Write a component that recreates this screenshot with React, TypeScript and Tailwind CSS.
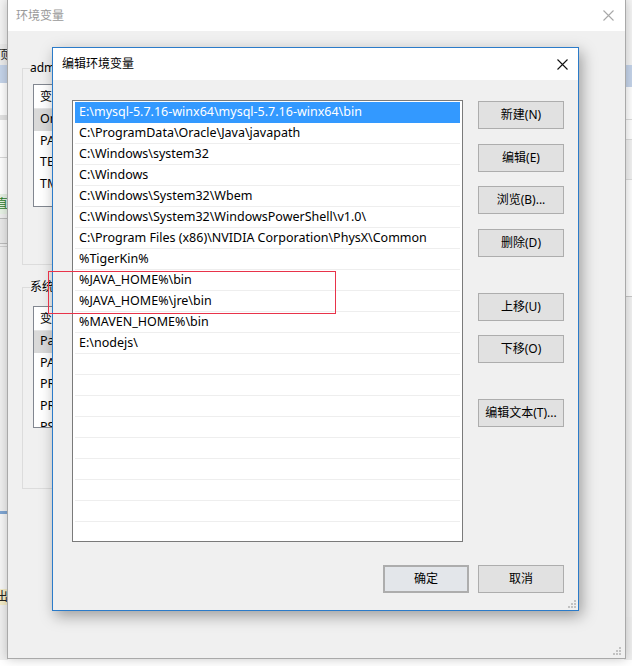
import React from "react";

const paths = [
  "E:\\mysql-5.7.16-winx64\\mysql-5.7.16-winx64\\bin",
  "C:\\ProgramData\\Oracle\\Java\\javapath",
  "C:\\Windows\\system32",
  "C:\\Windows",
  "C:\\Windows\\System32\\Wbem",
  "C:\\Windows\\System32\\WindowsPowerShell\\v1.0\\",
  "C:\\Program Files (x86)\\NVIDIA Corporation\\PhysX\\Common",
  "%TigerKin%",
  "%JAVA_HOME%\\bin",
  "%JAVA_HOME%\\jre\\bin",
  "%MAVEN_HOME%\\bin",
  "E:\\nodejs\\",
];

const userVars = ["OneDrive", "PATH", "TEMP", "TMP"];
const sysVars = ["Path", "PATHEXT", "PROCESSOR_ARCHITECTURE", "PROCESSOR_IDENTIFIER", "PSModulePath"];

function CloseX({ className = "" }: { className?: string }) {
  return (
    <svg width="11" height="11" viewBox="0 0 11 11" className={className}>
      <path d="M0.5 0.5L10.5 10.5M10.5 0.5L0.5 10.5" stroke="currentColor" strokeWidth="1.1" />
    </svg>
  );
}

function Grip() {
  return (
    <svg width="8" height="8" viewBox="0 0 8 8">
      <rect x="6" y="0" width="2" height="2" fill="#c2c2c2" />
      <rect x="3" y="3" width="2" height="2" fill="#c2c2c2" />
      <rect x="6" y="3" width="2" height="2" fill="#c2c2c2" />
      <rect x="0" y="6" width="2" height="2" fill="#c2c2c2" />
      <rect x="3" y="6" width="2" height="2" fill="#c2c2c2" />
      <rect x="6" y="6" width="2" height="2" fill="#c2c2c2" />
    </svg>
  );
}

function WinButton({ children, className = "" }: { children: React.ReactNode; className?: string }) {
  return (
    <div
      className={`h-[28px] w-[86px] shrink-0 flex items-center justify-center border border-[#adadad] bg-[#e1e1e1] text-black ${className}`}
    >
      {children}
    </div>
  );
}

function VarList({ items, height }: { items: string[]; height: string }) {
  return (
    <div className={`w-[400px] ${height} border border-[#828790] bg-white overflow-hidden text-[12.5px]`}>
      <div className="h-[24px] flex items-center pl-[6px] border-b border-[#e5e5e5] text-[12px]">变量</div>
      {items.map((v, i) => (
        <div key={v} className={`h-[21.5px] flex items-center pl-[6px] ${i === 0 ? "bg-[#d9d9d9]" : ""}`}>
          {v}
        </div>
      ))}
    </div>
  );
}

export default function App() {
  return (
    <div className="relative w-[632px] h-[666px] overflow-hidden bg-white text-[12px] font-['Noto_Sans','Noto_Sans_CJK_SC',sans-serif]">
      {/* window behind, left edge */}
      <div className="absolute left-0 top-0 w-[8px] h-[660px] flex flex-col bg-[#f0f0f0]">
        <div className="h-[44px] bg-[#f4f4f4]" />
        <div className="h-[21px] flex justify-end overflow-hidden bg-[#ececec] text-[#222]">
          <span className="shrink-0 leading-[21px]">顶</span>
        </div>
        <div className="h-[18px] bg-[#c5d4ea]" />
        <div className="h-[37px] bg-white border-b-[5px] border-[#e3e3e3]" />
        <div className="h-[38px] bg-white border-b border-[#d9d9d9]" />
        <div className="h-[36px] bg-white" />
        <div className="h-[20px] flex justify-end overflow-hidden bg-[#e8f3e6] text-[#2d7d2a]">
          <span className="shrink-0 leading-[20px]">直</span>
        </div>
        <div className="h-[26px] mt-[4px] border-y border-[#bdbdbd] bg-[#eaeaea]" />
        <div className="h-[265px] bg-[#f0f0f0] border-t border-[#d0d0d0] mt-[2px]" />
        <div className="h-[3px] bg-[#7fa6d3]" />
        <div className="h-[75px] bg-[#f7f7f7]" />
        <div className="h-[16px] flex justify-end overflow-hidden bg-[#f4ecc8] text-[#222]">
          <span className="shrink-0 leading-[16px]">出</span>
        </div>
      </div>

      {/* window behind, right edge */}
      <div className="absolute right-0 top-0 w-[8px] h-[660px] flex flex-col bg-[#f0f0f0]">
        <div className="h-[65px] bg-[#f4f4f4]" />
        <div className="h-[22px] bg-[#c5d4ea]" />
        <div className="h-[33px] bg-white border-b border-[#dcdcdc]" />
        <div className="h-[20px] bg-white border-b border-[#dcdcdc]" />
        <div className="h-[40px] bg-[#f2f2f2] border-b border-[#dcdcdc]" />
        <div className="h-[117px] bg-white border-b border-[#c8c8c8]" />
        <div className="h-[320px] bg-[#f2f2f2]" />
      </div>

      {/* outer window: 环境变量 */}
      <div className="absolute left-[7px] top-0 w-[619px] h-[659px] flex flex-col border border-t-0 border-[#a9a9a9] bg-[#f0f0f0] shadow-[0_0_10px_rgba(0,0,0,0.22)]">
        <div className="h-[31px] shrink-0 flex items-center justify-between pl-[8px] pr-[11px] bg-white text-[#999]">
          <span>环境变量</span>
          <CloseX className="text-[#a8a8a8]" />
        </div>
        <div className="flex-1 flex flex-col pl-[14px]">
          <fieldset className="mt-[29px] w-[540px] border border-[#dcdcdc] px-[10px]">
            <legend className="-ml-[3px] leading-[16px] text-black">admin 的用户变量(U)</legend>
            <div className="mt-[8px] mb-[57px]">
              <VarList items={userVars} height="h-[123px]" />
            </div>
          </fieldset>
          <fieldset className="mt-[14px] w-[540px] border border-[#dcdcdc] px-[10px]">
            <legend className="-ml-[3px] leading-[16px] text-black">系统变量(S)</legend>
            <div className="mt-[11px] mb-[60px]">
              <VarList items={sysVars} height="h-[122px]" />
            </div>
          </fieldset>
          <div className="flex-1" />
          <div className="flex justify-end pr-[4px] pb-[3px]">
            <Grip />
          </div>
        </div>
      </div>

      {/* modal dialog: 编辑环境变量 */}
      <div className="absolute left-[52px] top-[47px] w-[527px] h-[564px] flex flex-col border border-[#2b7bc9] bg-[#f0f0f0] shadow-[3px_5px_14px_rgba(0,0,0,0.35)]">
        <div className="h-[32px] shrink-0 flex items-center justify-between pl-[9px] pr-[10px] bg-white text-black">
          <span>编辑环境变量</span>
          <CloseX className="text-[#111]" />
        </div>
        <div className="relative flex-1 flex flex-col pt-[20px] pl-[19px] pr-[14px] pb-[17px]">
          <div className="flex gap-[15px]">
            <div className="w-[391px] h-[442px] shrink-0 border border-[#7a7a7a] bg-white pt-[1px] px-[2px] overflow-hidden text-[12.5px]">
              {Array.from({ length: 21 }).map((_, i) => (
                <div
                  key={i}
                  className={`h-[21px] flex items-center pl-[4px] border-b whitespace-nowrap ${
                    i === 0 ? "bg-[#3399ff] text-white border-[#3399ff]" : "text-black border-[#eeeeee]"
                  }`}
                >
                  {paths[i] ?? ""}
                </div>
              ))}
            </div>
            <div className="flex flex-col">
              <WinButton className="mt-[1px]">新建(N)</WinButton>
              <WinButton className="mt-[15px]">编辑(E)</WinButton>
              <WinButton className="mt-[14px]">浏览(B)...</WinButton>
              <WinButton className="mt-[15px]">删除(D)</WinButton>
              <WinButton className="mt-[36px]">上移(U)</WinButton>
              <WinButton className="mt-[14px]">下移(O)</WinButton>
              <WinButton className="mt-[36px]">编辑文本(T)...</WinButton>
            </div>
          </div>
          <div className="mt-[23px] flex justify-end gap-[9px]">
            <WinButton className="border-2 border-[#2a78cf] bg-[#e3e6ea]">确定</WinButton>
            <WinButton>取消</WinButton>
          </div>
          <div className="absolute right-[2px] bottom-[2px]">
            <Grip />
          </div>
        </div>
      </div>

      {/* annotation drawn over both windows */}
      <svg className="absolute z-50 left-[47px] top-[270px] pointer-events-none" width="290" height="45" viewBox="0 0 290 45">
        <rect x="1.5" y="1.5" width="287" height="42" fill="none" stroke="#e8334a" strokeWidth="1" />
      </svg>
    </div>
  );
}
